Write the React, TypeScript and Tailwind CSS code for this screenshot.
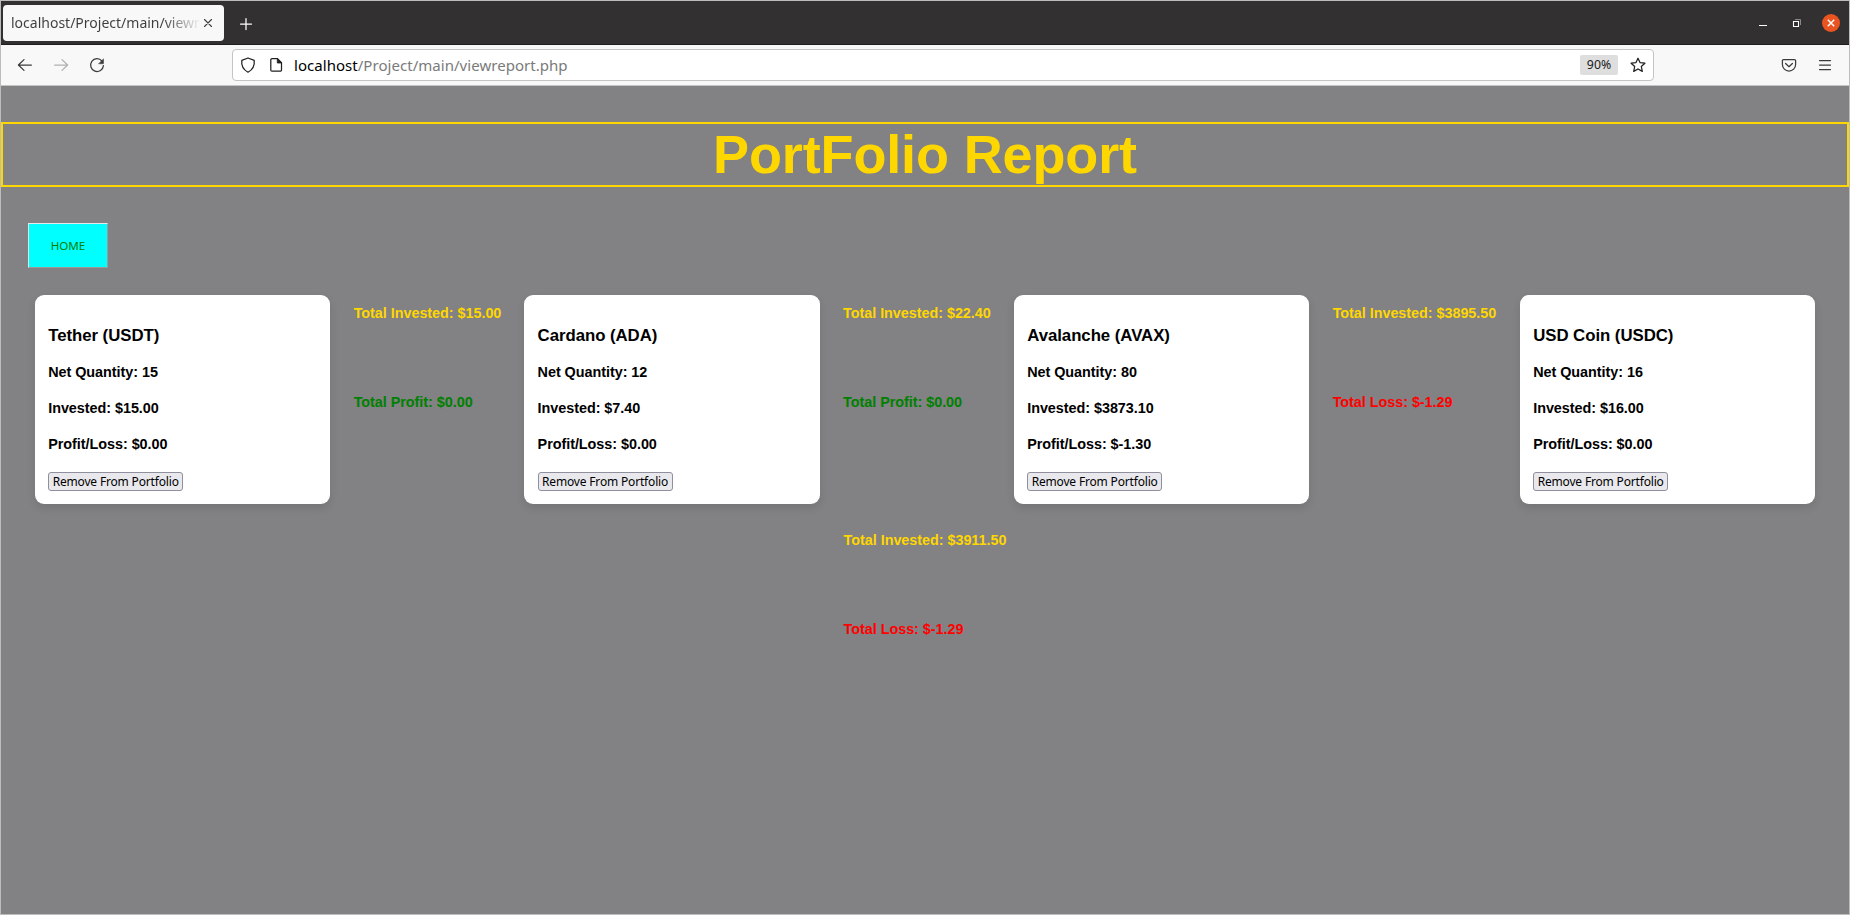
import type { ReactNode } from 'react';

type Coin = { name: string; quantity: string; invested: string; profit: string };
type Total = { invested: string; label: string; value: string; tone: string };

const holdings: { coin: Coin; total?: Total; width: string }[] = [
  {
    coin: { name: 'Tether (USDT)', quantity: '15', invested: '$15.00', profit: '$0.00' },
    total: { invested: '$15.00', label: 'Total Profit', value: '$0.00', tone: 'text-[#008000]' },
    width: 'w-[489.4px]',
  },
  {
    coin: { name: 'Cardano (ADA)', quantity: '12', invested: '$7.40', profit: '$0.00' },
    total: { invested: '$22.40', label: 'Total Profit', value: '$0.00', tone: 'text-[#008000]' },
    width: 'w-[489.6px]',
  },
  {
    coin: { name: 'Avalanche (AVAX)', quantity: '80', invested: '$3873.10', profit: '$-1.30' },
    total: { invested: '$3895.50', label: 'Total Loss', value: '$-1.29', tone: 'text-[#ff0000]' },
    width: 'w-[506px]',
  },
  {
    coin: { name: 'USD Coin (USDC)', quantity: '16', invested: '$16.00', profit: '$0.00' },
    width: 'w-[295px]',
  },
];

const grandTotal: Total = { invested: '$3911.50', label: 'Total Loss', value: '$-1.29', tone: 'text-[#ff0000]' };

function Icon({ children, className = '' }: { children: ReactNode; className?: string }) {
  return (
    <svg viewBox="0 0 16 16" fill="none" stroke="currentColor" strokeWidth="1.25" strokeLinecap="round" strokeLinejoin="round" className={`size-4 shrink-0 ${className}`}>
      {children}
    </svg>
  );
}

function TabStrip() {
  return (
    <div className="flex h-[44px] items-start border-b border-[#1f1d1d] bg-[#333031] pl-[2px] pt-1 text-white">
      <div className="flex h-9 w-[221px] items-center rounded-[4px] bg-[#f8f8f8] pl-2 text-[#3d3d3d]">
        <span className="w-[190px] overflow-hidden whitespace-nowrap bg-gradient-to-r from-[#3d3d3d] from-80% to-transparent to-100% bg-clip-text text-[14px] leading-5 text-transparent">
          localhost/Project/main/viewr
        </span>
        <Icon className="-ml-px">
          <path d="M4.500 4.500l7 7M11.500 4.500l-7 7" strokeWidth="1.1" />
        </Icon>
      </div>
      <Icon className="ml-[14px] mt-[11px]">
        <path d="M8 2.500v11M2.500 8h11" />
      </Icon>
      <div className="ml-auto flex h-9 items-center pr-[9px]">
        <Icon className="mr-[18px]">
          <path d="M4 10.500h8" strokeLinecap="butt" strokeWidth="1" />
        </Icon>
        <Icon className="mr-[17px]">
          <path d="M6 4.500h5.500V10" stroke="#8b8989" strokeWidth="1" strokeLinecap="butt" strokeLinejoin="miter" />
          <path d="M4.500 6.500h5v5h-5z" strokeLinejoin="miter" strokeWidth="1.1" />
        </Icon>
        <span className="flex size-[18px] items-center justify-center rounded-full bg-[#e95420]">
          <Icon>
            <path d="M4.800 4.800l6.400 6.400M11.200 4.800l-6.400 6.400" strokeWidth="1.5" strokeLinecap="butt" />
          </Icon>
        </span>
      </div>
    </div>
  );
}

function Toolbar() {
  return (
    <div className="flex h-[41px] items-center border-b border-[#c4c4c4] bg-[#f8f8f8] pb-px pr-4 text-[#3b3b3b]">
      <div className="flex w-[231px] items-center gap-5 pl-4">
        <Icon>
          <path d="M14.400 8H1.600M7 2.600L1.400 8 7 13.400" />
        </Icon>
        <Icon className="text-[#b0b0b0]">
          <path d="M1.600 8h12.800M9 2.600L14.600 8 9 13.400" />
        </Icon>
        <Icon>
          <path d="M13 4.100A6.400 6.400 0 1 0 14.400 8.600" />
          <path d="M14.500 2.100v4.200a.5.5 0 0 1-.5.5H9.800z" fill="currentColor" strokeWidth=".5" />
        </Icon>
      </div>
      <div className="flex h-8 w-[1422px] items-center rounded-[4px] border border-[#c4c4c4] bg-white px-[7px] text-[#202020]">
        <Icon>
          <path d="M8 1L1.800 3.300c-.6 4.700 1.600 9.300 6.200 11.900 4.600-2.600 6.800-7.200 6.200-11.900z" />
        </Icon>
        <Icon className="ml-3">
          <path d="M4 1.700h5.500l4 4V13a1.200 1.200 0 0 1-1.200 1.200H4A1.200 1.200 0 0 1 2.800 13V2.900A1.200 1.200 0 0 1 4 1.700z" />
          <path d="M9.300 1.700V6h4.300z" fill="currentColor" strokeWidth=".8" />
        </Icon>
        <span className="ml-[10px] whitespace-nowrap text-[15px] leading-5 tracking-[0.04px] text-[#7a7a7a]">
          <span className="text-black">localhost</span>/Project/main/viewreport.php
        </span>
        <span className="ml-auto flex h-5 w-[38px] items-center justify-center rounded-[2px] bg-[#dedede] pt-px text-[12.3px]">90%</span>
        <Icon className="ml-3">
          <path d="M8 1.200l2 4.400 4.900.6-3.600 3.300 1 4.900L8 12l-4.300 2.400 1-4.900L1.100 6.200 6 5.600z" />
        </Icon>
      </div>
      <Icon className="ml-auto">
        <path d="M2.500 2.500h11a1.100 1.100 0 0 1 1.100 1.100v3.900a6.600 6.600 0 0 1-13.200 0V3.600a1.100 1.100 0 0 1 1.100-1.100z" />
        <path d="M4.600 6.500L8 9.700l3.400-3.200" />
      </Icon>
      <Icon className="ml-5">
        <path d="M2.500 3.500h11M2.500 8h11M2.500 12.500h11" />
      </Icon>
    </div>
  );
}

function CoinCard({ coin }: { coin: Coin }) {
  return (
    <article className="h-[209px] w-[295.2px] shrink-0 rounded-[9px] bg-white pl-[13.2px] pt-[31px] text-[14.4px] font-bold leading-5 tracking-[-0.04px] text-black shadow-[0_4px_8px_rgba(0,0,0,0.1)]">
      <h3 className="text-[16.8px] leading-5">{coin.name}</h3>
      <p className="mt-4">Net Quantity: {coin.quantity}</p>
      <p className="mt-4">Invested: {coin.invested}</p>
      <p className="mt-4">Profit/Loss: {coin.profit}</p>
      <button className="mt-[18px] flex h-[19px] w-[135px] items-center justify-center whitespace-nowrap rounded-[3px] border border-[#8f8f9d] bg-[#e9e9ed] pt-px font-['Noto_Sans',sans-serif] text-[12px] font-normal leading-none tracking-[-0.17px]">
        Remove From Portfolio
      </button>
    </article>
  );
}

function Totals({ total }: { total: Total }) {
  return (
    <div className="whitespace-nowrap text-[14.4px] font-bold leading-5 tracking-[-0.04px]">
      <p className="text-[#ffd700]">Total Invested: {total.invested}</p>
      <p className={`mt-[69px] ${total.tone}`}>
        {total.label}: {total.value}
      </p>
    </div>
  );
}

export default function App() {
  return (
    <div className="flex h-[915px] w-[1850px] flex-col overflow-hidden border border-[#bcbcbc] bg-[#828183] font-['Noto_Sans',sans-serif]">
      <TabStrip />
      <Toolbar />
      <main className="flex-1 pt-9 font-['Liberation_Sans',Arial,sans-serif]">
        <h1 className="h-[65px] border-2 border-[#ffd700] text-center text-[54px] font-bold leading-[61px] tracking-[-0.13px] text-[#ffd700]">
          PortFolio Report
        </h1>
        <button className="ml-[27px] mt-9 flex h-[45px] w-20 items-center justify-center border border-b-[#9a9a9a] border-l-[#e8e8e8] border-r-[#9a9a9a] border-t-[#e8e8e8] bg-[#00ffff] pt-px font-['Noto_Sans',sans-serif] text-[11.6px] text-[#008000]">
          HOME
        </button>
        <div className="mt-[27px] flex pl-[34px]">
          {holdings.map(({ coin, total, width }) => (
            <section key={coin.name} className={`flex shrink-0 ${width}`}>
              <CoinCard coin={coin} />
              {total && (
                <div className="pl-[23.5px] pt-2">
                  <Totals total={total} />
                </div>
              )}
            </section>
          ))}
        </div>
        <div className="mt-[26px] flex justify-center">
          <Totals total={grandTotal} />
        </div>
      </main>
    </div>
  );
}
